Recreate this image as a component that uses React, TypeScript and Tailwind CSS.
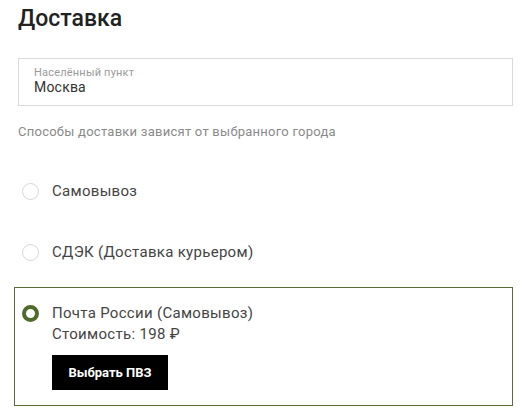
import { useState } from "react";

const options = [
  { id: "pickup", title: "Самовывоз" },
  { id: "cdek", title: "СДЭК (Доставка курьером)" },
  { id: "post", title: "Почта России (Самовывоз)", price: "Стоимость: 198 ₽" },
];

export default function App() {
  const [selected, setSelected] = useState("post");

  return (
    <div className="w-[523px] h-[410px] bg-white pl-[18px] pr-[10px] pt-[4px] font-['Roboto',sans-serif] text-[#333]">
      <h2 className="text-[23px] leading-[30px] font-medium text-[#222]">Доставка</h2>

      <div className="mt-[24px] h-[48px] border border-[#d9d9d9] px-[15px] pt-[8px]">
        <div className="text-[11px] leading-[12px] text-[#9a9a9a] tracking-[0.2px]">Населённый пункт</div>
        <div className="text-[14px] leading-[17px] text-[#333] tracking-[0.2px]">Москва</div>
      </div>

      <p className="mt-[17px] text-[13px] leading-[18px] text-[#8a8a8a] tracking-[0.25px]">
        Способы доставки зависят от выбранного города
      </p>

      <div className="mt-[24px] -ml-[4px] flex flex-col gap-[8px]">
        {options.map((o) => {
          const active = o.id === selected;
          return (
            <div
              key={o.id}
              onClick={() => setSelected(o.id)}
              className={
                "flex cursor-pointer gap-[13px] border px-[7px] py-[15px] " +
                (active ? "border-[#5b6b3c]" : "border-transparent")
              }
            >
              <span
                className={
                  "mt-[2px] h-[17px] w-[17px] shrink-0 rounded-full bg-white " +
                  (active ? "border-[4px] border-[#4f6b2b]" : "border border-[#d6d6d6]")
                }
              />
              <div className="flex flex-col">
                <span className="text-[15px] leading-[21px] text-[#444] tracking-[0.3px]">{o.title}</span>
                {o.price && (
                  <>
                    <span className="text-[15px] leading-[21px] text-[#444] tracking-[0.3px]">{o.price}</span>
                    <button className="mt-[10px] h-[35px] w-[116px] bg-black text-[13px] font-bold text-white">
                      Выбрать ПВЗ
                    </button>
                  </>
                )}
              </div>
            </div>
          );
        })}
      </div>
    </div>
  );
}
